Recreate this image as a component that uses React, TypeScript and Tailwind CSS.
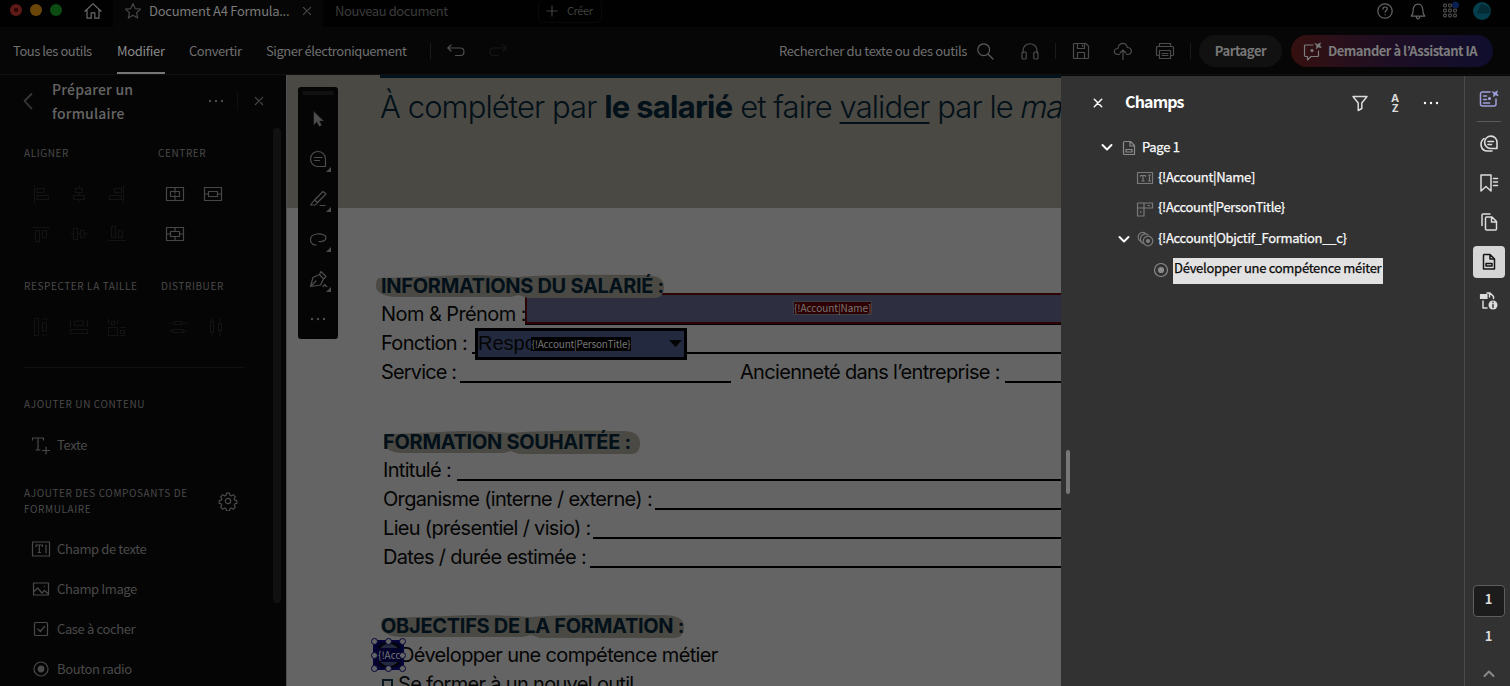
import type { ReactNode } from "react";

interface IconProps {
  children: ReactNode;
  className?: string;
}

const Icon: React.FC<IconProps> = ({ children, className = "" }) => (
  <svg
    viewBox="0 0 20 20"
    fill="none"
    stroke="currentColor"
    strokeWidth="1.2"
    strokeLinecap="round"
    strokeLinejoin="round"
    className={"h-5 w-5 shrink-0 " + className}
  >
    {children}
  </svg>
);

const Dots = ({ className = "" }) => (
  <Icon className={className}>
    <g fill="currentColor" stroke="none">
      <circle cx="4" cy="10" r="1.2" />
      <circle cx="10" cy="10" r="1.2" />
      <circle cx="16" cy="10" r="1.2" />
    </g>
  </Icon>
);

const Close = ({ className = "" }) => (
  <Icon className={className}>
    <path d="M6.300 6.300l7.400 7.400M13.700 6.300l-7.400 7.400" />
  </Icon>
);

const Sparkle = (
  <path d="M13.300 2.600l2.500.8 2.700-1.600-.7 2.500 1.500 2.400-2.700-.6-2.300 1.600.5-2.500z" fill="currentColor" strokeWidth=".6" />
);

const TabBar = () => (
  <header className="flex h-[27px] shrink-0 bg-[#010101]">
    <div className="flex h-[22px] w-full items-center">
      <div className="mb-0.5 ml-2.5 flex gap-2">
        <i className="flex h-3 w-3 items-center justify-center rounded-full bg-[#5e1a16]">
          <i className="h-1 w-1 rounded-full bg-[#2b0505]" />
        </i>
        <i className="h-3 w-3 rounded-full bg-[#6a4608]" />
        <i className="h-3 w-3 rounded-full bg-[#0b4c12]" />
      </div>
      <Icon className="ml-[21px] text-[#6b6b6b]">
        <path d="M2 10.3L10 2.6l8 7.7M4 8.8v8.4h4.2v-5.4h3.6v5.4H16V8.8" />
      </Icon>
      <div className="ml-2.5 flex h-[27px] items-center self-start bg-[#060606] pr-1.5 pb-[5px] pl-2.5">
        <Icon className="text-[#454545]">
          <path d="M10 2.6l2.2 5 5.4.5-4.1 3.6 1.2 5.3-4.7-2.8-4.7 2.8 1.2-5.3-4.1-3.6 5.4-.5z" />
        </Icon>
        <span className="ml-1.5 w-[140px] text-[13px] tracking-[-0.26px] text-[#7a7a7a]">Document A4 Formula...</span>
        <Close className="ml-2 text-[#484848]" />
      </div>
      <span className="ml-3 w-[203px] text-[13px] tracking-[-0.42px] text-[#3b3b3b]">Nouveau document</span>
      <div className="flex h-6 w-16 items-center rounded-md border border-[#0a0a0a] text-[#3f3f3f]">
        <Icon className="ml-[3px]">
          <path d="M5 10h10M10 5v10" />
        </Icon>
        <span className="-mt-0.5 ml-[5px] text-[11px] tracking-[-0.4px]">Créer</span>
      </div>
      <Icon className="ml-[773px] text-[#666]">
        <circle cx="10" cy="10" r="7.2" />
        <path d="M7.9 8.2c0-3 4.3-2.7 4.3-.3 0 1.6-2.1 1.7-2.1 3.3M10.1 13.6v.2" />
      </Icon>
      <Icon className="ml-[13px] text-[#666]">
        <path d="M3.2 15.2h13.6c-1.8-1.7-2-2.6-2-6.2 0-3.2-1.7-5.8-4.8-5.8S5.200 5.800 5.200 9c0 3.600-.2 4.500-2 6.200zM8.300 15.500c.3 3.300 3.100 3.300 3.400 0" />
      </Icon>
      <Icon className="ml-3 text-[#4a4a4a]">
        {[4.5, 9.5, 14.5].map((y) =>
          [5, 10, 15].map((x) => <rect key={x + "-" + y} x={x - 1.4} y={y - 1.4} width="2.8" height="2.8" rx=".8" />)
        )}
        <circle cx="15.500" cy="4" r="3.500" fill="#0a2050" stroke="none" />
      </Icon>
      <Icon className="ml-3">
        <circle cx="10" cy="10" r="9" fill="#053f4e" stroke="none" />
        <path d="M9 3L5 12.500h13.500C18.500 7 15 4 9 3z" fill="#042a34" stroke="none" />
      </Icon>
    </div>
  </header>
);

const Toolbar = () => (
  <nav className="flex h-12 shrink-0 items-center border-b border-[#101010] bg-[#060606] pl-[13px] text-[13px] tracking-[-0.45px] text-[#6f6f6f]">
    <span className="w-[104px]">Tous les outils</span>
    <span className="relative mr-6 flex h-full w-12 items-center tracking-[-0.3px] text-[#8a8a8a]">
      Modifier
      <i className="absolute bottom-0 left-0 h-0.5 w-full bg-[#777]" />
    </span>
    <span className="w-[77px]">Convertir</span>
    <span className="w-[164px]">Signer électroniquement</span>
    <i className="h-4 w-px bg-[#1a1a1a]" />
    <Icon className="ml-[15px] text-[#4f4f4f]">
      <path d="M5 4L1.800 7 5 10M2 7h12.500c4.600 0 4.600 7.500 0 7.500H9.500" />
    </Icon>
    <Icon className="ml-[22px] text-[#161616]">
      <path d="M15 4l3.200 3L15 10M18 7H5.500c-4.600 0-4.600 7.500 0 7.500h5" />
    </Icon>
    <span className="ml-[271px] w-[196px] tracking-[-0.37px]">Rechercher du texte ou des outils</span>
    <Icon className="text-[#5c5c5c]">
      <circle cx="8.700" cy="8.700" r="5.900" />
      <path d="M13 13l5 5" />
    </Icon>
    <Icon className="ml-[25px] text-[#4c4c4c]">
      <path d="M3 12V9.500c0-9 14-9 14 0V12" />
      <rect x="2" y="11" width="4.200" height="7" rx="1" />
      <rect x="13.800" y="11" width="4.200" height="7" rx="1" />
    </Icon>
    <i className="ml-[15px] h-4 w-px bg-[#1a1a1a]" />
    <Icon className="ml-[15px] text-[#4c4c4c]">
      <path d="M2.500 3.500a1 1 0 011-1h11.300l2.700 2.700v11.300a1 1 0 01-1 1h-13a1 1 0 01-1-1zM6.500 2.500v5h7v-5M6.500 17.500v-6h7v6M11.500 4v1.500" />
    </Icon>
    <Icon className="ml-[22px] text-[#4c4c4c]">
      <path d="M6.500 13.500H5c-5 0-4.800-6 0-6C5.500 1 13 .5 14.300 6.500c5.500 0 5.200 7 .7 7h-1.500M10 18.500V9.300M7 12l3-3 3 3" />
    </Icon>
    <Icon className="ml-[22px] text-[#4c4c4c]">
      <path d="M4.500 5.500v-3h11v3M4.500 14.500h-2a1 1 0 01-1-1v-7a1 1 0 011-1h15a1 1 0 011 1v7a1 1 0 01-1 1h-2" />
      <path d="M4.500 9.500h11v8h-11zM7 12.500h6M7 14.500h6" />
    </Icon>
    <i className="ml-[15px] h-4 w-px bg-[#1a1a1a]" />
    <span className="ml-2 flex h-8 w-[83px] items-center justify-center rounded-full bg-[#111] font-bold tracking-[-0.45px] text-[#777]">
      Partager
    </span>
    <span className="ml-[9px] flex h-8 w-[202px] items-center rounded-full bg-linear-to-r from-[#350f0e] via-[#1d0e24] to-[#100e2e] pl-[11px] font-bold tracking-[-0.5px] text-[#7c7c7c]">
      <Icon>
        <path d="M11 4H3.500a1 1 0 00-1 1v9.500a1 1 0 001 1h2V19l3.500-3.500h6.500a1 1 0 001-1V10" />
        {Sparkle}
        <circle cx="10" cy="9.500" r="1" fill="currentColor" />
      </Icon>
      <span className="ml-1.5">Demander à l’Assistant IA</span>
    </span>
  </nav>
);

const alignIcons = [
  "M3.500 1.500v17M6 4.500h7v4H6zM6 11.500h11.500v4H6z",
  "M10 1.500v3M10 8.500v3M10 15.500v3M6.500 4.500h7v4h-7zM4.500 11.500h11v4h-11z",
  "M16.500 1.500v17M7.500 4.500h7v4h-7zM2.500 11.500h12v4h-12z",
];

const alignIcons2 = [
  "M1.500 3.500h17M4.500 6.500h4v11h-4zM11.500 6.500h4v7h-4z",
  "M1.500 10h3M8.500 10h3M15.500 10h3M4.500 4.500h4v11h-4zM11.500 6.500h4v7h-4z",
  "M1.500 16.500h17M4.500 2.500h4v11h-4zM11.500 6.500h4v7h-4z",
];

const sizeIcons = [
  "M3.500 1.500h4v17h-4zM11.500 6h4v8h-4zM11 2h5.500M11 18h5.500",
  "M5.500 4h9v4.500h-9zM1.500 12.500h17v4h-17zM1.500 3.500v6M18.500 3.500v6",
  "M1.500 10.500h9v8h-9zM4.500 4h3v4h-3zM13.500 13.500h4v3h-4zM1.500 2v5M10.500 2v5M13 10.500h5.500M13 18.500h5.500",
];

const distributeIcons = [
  "M1.500 6h5M13.500 6h5M6.500 4.500h7v3h-7zM1.500 14h3M15.500 14h3M4.500 12.500h11v3h-11z",
  "M6 1.500v3M6 15.500v3M4.500 4.500h3v11h-3zM14 1.500v5M14 13.500v5M12.500 6.500h3v7h-3z",
];

const components = [
  {
    label: "Champ de texte",
    icon: <path d="M1.500 3h17v14h-17zM5 7.500V6h6.500v1.500M8.300 6v7.500M7 13.500h2.600M15 6v8" />,
  },
  {
    label: "Champ Image",
    icon: <path d="M2.500 4h15v12h-15zM2.500 13l4-4 4.500 5 2.500-2.500 4 3.500M13.300 7.300v.2" />,
  },
  {
    label: "Case à cocher",
    icon: <path d="M4.500 3.500h11a1 1 0 011 1v11a1 1 0 01-1 1h-11a1 1 0 01-1-1v-11a1 1 0 011-1zM6.800 10l2.500 2.500 4.200-5" />,
  },
  {
    label: "Bouton radio",
    icon: (
      <>
        <circle cx="10" cy="10" r="7" />
        <circle cx="10" cy="10" r="2.800" fill="currentColor" />
      </>
    ),
  },
];

const Cell: React.FC<{ d: string; on?: boolean }> = ({ d, on }) => (
  <span className="flex w-[38px] justify-center">
    <Icon className={on ? "text-[#474747]" : "text-[#131313]"}>
      <path d={d} />
    </Icon>
  </span>
);

const LeftPanel = () => (
  <aside className="relative w-[286px] shrink-0 bg-[#050505] text-[#4a4a4a]">
    <div className="flex h-[70px] pt-[3px]">
      <Icon className="mt-[13px] ml-[18px] text-[#383838]">
        <path d="M13.500 3L6.500 10l7 7.500" strokeWidth="1.800" />
      </Icon>
      <h2 className="-mt-px ml-3.5 w-[154px] text-[14px] leading-6 font-medium tracking-[0.2px] text-[#666]">
        Préparer un
        <br />
        formulaire
      </h2>
      <Dots className="mt-[13px]" />
      <i className="mt-[14px] ml-[11px] h-[18px] w-px bg-[#0f0f0f]" />
      <Close className="mt-[13px] ml-[11px]" />
    </div>

    <div className="flex h-4 pl-6 text-[10px] leading-4 tracking-[0.6px]">
      <h3 className="w-[134px]">ALIGNER</h3>
      <h3>CENTRER</h3>
    </div>
    <div className="mt-[13px] flex h-10 items-center pl-[22px]">
      {alignIcons.map((d) => (
        <Cell key={d} d={d} />
      ))}
      <span className="w-5" />
      <Cell on d="M1.500 3.500h17v13h-17zM5.500 7.500h9v5h-9zM10 3.500v5.500M10 11v5.500" />
      <Cell on d="M1.500 3.500h17v13h-17zM5.500 7.500h9v5h-9zM1.500 10h4M14.500 10h4" />
    </div>
    <div className="flex h-10 items-center pl-[22px]">
      {alignIcons2.map((d) => (
        <Cell key={d} d={d} />
      ))}
      <span className="w-5" />
      <Cell on d="M1.500 3.500h17v13h-17zM5.500 7.500h9v5h-9zM10 3.500v4M10 12.500v4M1.500 10h4M14.500 10h4" />
    </div>

    <div className="mt-6 flex h-4 pl-6 text-[10px] leading-4 tracking-[0.6px]">
      <h3 className="w-[137px]">RESPECTER LA TAILLE</h3>
      <h3>DISTRIBUER</h3>
    </div>
    <div className="mt-[13px] flex h-10 items-center pl-[22px]">
      {sizeIcons.map((d) => (
        <Cell key={d} d={d} />
      ))}
      <span className="w-[23px]" />
      {distributeIcons.map((d) => (
        <Cell key={d} d={d} />
      ))}
    </div>
    <hr className="mt-5 ml-6 w-[221px] border-[#111]" />

    <h3 className="mt-[28px] ml-6 text-[10px] leading-4 tracking-[0.6px]">AJOUTER UN CONTENU</h3>
    <div className="mt-[13px] flex h-10 items-center pl-[31px] text-[13px] tracking-[-0.35px]">
      <Icon>
        <path d="M1.500 5V3h11v2M7 3v12M5 15h4M15 12v7M11.500 15.500h7" />
      </Icon>
      <span className="ml-1.5">Texte</span>
    </div>

    <div className="mt-5 flex h-8 items-center pl-6">
      <h3 className="w-[194px] text-[10px] leading-4 tracking-[0.6px]">
        AJOUTER DES COMPOSANTS DE
        <br />
        FORMULAIRE
      </h3>
      <Icon className="-mt-px">
        <circle cx="10" cy="10" r="2.700" />
        <path d="M8.500 2.200h3l.5 2.200 1.400.6 2-1.200 2 2-1.200 2 .6 1.400 2 .5v2.600l-2 .5-.6 1.400 1.200 2-2 2-2-1.200-1.400.6-.5 2.200h-3L8 17.600l-1.400-.6-2 1.200-2-2 1.200-2-.6-1.400-2-.5V9.700l2-.5.6-1.400-1.200-2 2-2 2 1.200L8 4.400z" />
      </Icon>
    </div>
    <div className="mt-3">
      {components.map((c) => (
        <div key={c.label} className="flex h-10 items-center pl-[31px] text-[13px] tracking-[-0.37px]">
          <Icon>{c.icon}</Icon>
          <span className="ml-1.5">{c.label}</span>
        </div>
      ))}
    </div>
    <i className="absolute top-[53px] right-[5px] h-[475px] w-2 rounded-full bg-[#111]" />
  </aside>
);

const QuickTools = () => (
  <div className="absolute top-3 left-[11px] flex h-[252px] w-10 flex-col items-center rounded-[3px] bg-[#050505] pt-1 text-[#4d4d4d]">
    <i className="h-1 w-8 rounded-full bg-[#111]" />
    <Icon className="mt-[14px]">
      <path d="M6 3v12.500l3-3 2.300 4.700 2-1-2.300-4.500h4z" fill="currentColor" strokeWidth=".5" />
    </Icon>
    {[
      "M17.500 17.500H10a7.500 7.500 0 117.500-7.500zM6.500 8.500h7.500M6.500 11.500h5",
      "M6.500 11l8.500-8.500 3 2.500-8.500 8.500zM6.500 11l3 2.500-2 2.500H2.500zM12 16.500h5",
      "M11 12.500c3.500.5 7-1 7-3.500 0-3.500-5-4.500-9-4-9 1-8 10.500-1 11",
      "M2.500 17.500L5 8.500l6.500-3 4 4.500-3 6zM3 17l5-5M11.500 5.500L13 2.500l5 5-2.500 2.500M15 17.500l2-2 1 2h1",
    ].map((d) => (
      <div key={d} className="relative mt-5 h-5">
        <Icon>
          <path d={d} />
        </Icon>
        <svg viewBox="0 0 5 5" className="absolute -right-[3px] -bottom-[3px] h-[5px] w-[5px]">
          <path d="M5 0v5H0z" fill="currentColor" />
        </svg>
      </div>
    ))}
    <Dots className="mt-5" />
  </div>
);

interface HeadingProps {
  children: ReactNode;
  width: number;
  offset: number;
}

// section title on a brush stroke
const Heading: React.FC<HeadingProps> = ({ children, width, offset }) => (
  <h4 className="relative h-[28.800px] text-[20px] font-bold tracking-[-0.3px] text-[#02101a]">
    <svg
      viewBox="0 0 285 23"
      preserveAspectRatio="none"
      className="absolute top-[3px] h-[23px] overflow-visible"
      style={{ left: offset, width }}
    >
      <path
        d="M4 3C40 2 60 1 85 0c25 0 40 1 55 2 45-3 90-2 125-2 14 0 20 4 20 12 0 8-4 11-10 11H150l-9-3-8 2H22C6 22 0 16 0 12c0-6 1-9 4-9z"
        fill="#4b4943"
      />
    </svg>
    <span className="relative">{children}</span>
  </h4>
);

interface LineProps {
  label: string;
  width: string;
}

const Line: React.FC<LineProps> = ({ label, width }) => (
  <div className="flex h-[28.800px]">
    <span className={"shrink-0 " + width}>{label}</span>
    <i className="mt-[23px] h-0.5 grow bg-black" />
  </div>
);

const Handle: React.FC<{ at: string }> = ({ at }) => (
  <i className={"absolute h-[7px] w-[7px] rounded-full border border-[#06063a] bg-[#646464] " + at} />
);

const Doc = () => (
  <main className="relative w-[775px] shrink-0 overflow-hidden border-l border-[#4f4f4f] bg-[#646464] font-['Inter',sans-serif] whitespace-nowrap text-[#050505]">
    <div className="h-[133px] bg-[#4b4943] pl-[93px]">
      <div className="h-[3px] bg-[#02131d]" />
      <p className="mt-1.5 text-[31px] leading-[46px] font-light tracking-[-0.92px] text-[#021019]">
        À compléter par <b className="font-bold tracking-[-0.75px]">le salarié</b> et faire{" "}
        <span className="underline decoration-2 underline-offset-4">valider</span> par le{" "}
        <span className="inline-block -skew-x-12">manager</span>
      </p>
    </div>

    <div className="mt-[63.600px] pl-[94px] text-[20px] leading-[28.800px] tracking-[-0.68px]">
      <Heading width={288} offset={-5}>
        INFORMATIONS DU SALARIÉ :
      </Heading>
      <div className="flex h-[28.800px]">
        <span className="w-[144px] shrink-0 tracking-[-0.58px]">Nom &amp; Prénom :</span>
        <div className="-mt-[7.400px] h-8 grow border-b-2 border-black">
          <div className="flex h-[31px] items-center border-2 border-r-0 border-[#2e0202] bg-[#2d2f40] pl-[266px]">
            <span className="-mt-px h-[14px] w-[79px] border border-[#3c3c46] bg-[#2e0202] font-['Noto_Sans_CJK_JP',sans-serif] text-[10px] leading-[12px] tracking-[-0.05px] text-[#777]">
              {"{!Account|Name]"}
            </span>
          </div>
        </div>
      </div>
      <div className="flex h-[28.800px]">
        <span className="w-[91px] shrink-0">Fonction :</span>
        <i className="mt-[23px] h-0.5 w-[3px] bg-black" />
        <div className="relative -mt-[1.400px] flex h-8 w-[212px] shrink-0 items-center border-[3px] border-black bg-[#232a3f] font-['Liberation_Sans',sans-serif] text-[20px] tracking-normal">
          Respo
          <span className="absolute left-[53px] h-[14px] w-[100px] bg-black text-center font-['Noto_Sans_CJK_JP',sans-serif] text-[10px] leading-[14px] tracking-[-0.2px] text-[#777]">
            {"{!Account|PersonTitle}"}
          </span>
          <svg viewBox="0 0 13 7" className="absolute right-0.5 h-[7px] w-[13px]">
            <path d="M0 0h13L6.500 7z" fill="#050505" />
          </svg>
        </div>
        <i className="mt-[23px] h-0.5 grow bg-black" />
      </div>
      <div className="flex h-[28.800px]">
        <span className="w-[79px] shrink-0 tracking-[-0.85px]">Service :</span>
        <i className="mt-[23px] h-0.5 w-[271px] bg-black" />
        <span className="ml-[9px] w-[265px] shrink-0">Ancienneté dans l’entreprise :</span>
        <i className="mt-[23px] h-0.5 grow bg-black" />
      </div>

      <div className="mt-[40.800px] pl-0.5">
        <Heading width={256} offset={1}>
          FORMATION SOUHAITÉE :
        </Heading>
        <Line label="Intitulé :" width="w-[74px]" />
        <Line label="Organisme (interne / externe) :" width="w-[272px]" />
        <Line label="Lieu (présentiel / visio) :" width="w-[210px]" />
        <Line label="Dates / durée estimée :" width="w-[207px]" />
      </div>

      <div className="mt-[40.400px]">
        <Heading width={303} offset={0}>
          OBJECTIFS DE LA FORMATION :
        </Heading>
        <div className="relative h-[28.800px] pl-[19px] tracking-[-0.65px]">
          Développer une compétence métier
          <div className="absolute -top-px -left-2 flex h-[30px] w-[31px] items-center justify-center border-2 border-[#06063a] bg-[#03032c]">
            <svg viewBox="0 0 26 26" className="absolute h-[26px] w-[26px]">
              <circle cx="13" cy="13" r="12" fill="#232a3f" stroke="#050505" strokeWidth="2" />
            </svg>
            <span className="relative h-[14px] w-full overflow-hidden bg-[#03032c] pl-[3px] font-['Noto_Sans_CJK_JP',sans-serif] text-[10px] leading-[14px] tracking-normal text-[#777]">
              {"{!Acc"}
            </span>
            <Handle at="-top-1 -left-1" />
            <Handle at="-top-1 left-[10px]" />
            <Handle at="-top-1 -right-1" />
            <Handle at="top-[10px] -left-1" />
            <Handle at="top-[10px] -right-1" />
            <Handle at="-bottom-1 -left-1" />
            <Handle at="-bottom-1 left-[10px]" />
            <Handle at="-bottom-1 -right-1" />
          </div>
        </div>
        <div className="flex h-[28.800px]">
          <i className="mt-[9px] mr-[5px] ml-px h-[11px] w-[11px] border-2 border-[#0a1820]" />
          Se former à un nouvel outil
        </div>
      </div>
    </div>
    <QuickTools />
  </main>
);

const Chevron = ({ className = "" }) => (
  <Icon className={className}>
    <path d="M5.500 8l4.500 4.500L14.500 8" strokeWidth="2" />
  </Icon>
);

const fieldsIcons = {
  page: (
    <path d="M5.500 3.500h6l4 4v9h-10a1 1 0 01-1-1v-11a1 1 0 011-1zM11 3.500V8h4.500M7 11.500h6v2.500H7z" />
  ),
  text: <path d="M2.500 4.500h15v11h-15zM5.500 8.500V7.500h5v1M8 7.500V13M7 13h2M14.500 7v6M13.500 7h2M13.500 13h2" />,
  list: <path d="M2.500 4h15v5h-15zM9 4v13H2.500V4M13 6.500h1.500M5.700 12.500v1" />,
  group: (
    <>
      <path d="M5.500 12.800A4.800 4.800 0 118.800 3.800M7 14.500A4.800 4.800 0 1112 5.500" />
      <circle cx="12" cy="12" r="4.800" />
      <circle cx="12" cy="12" r="1.500" fill="currentColor" />
    </>
  ),
  radio: (
    <>
      <circle cx="10" cy="10" r="6.500" />
      <circle cx="10" cy="10" r="2.500" fill="currentColor" />
    </>
  ),
};

const FieldsPanel = () => (
  <section className="relative mt-px w-[403px] shrink-0 bg-[#323232] text-[13px] tracking-[-0.3px] text-[#fafafa]">
    <div className="flex h-[56px] items-center pb-[3px] pl-[27px]">
      <Close className="stroke-[1.5]" />
      <h2 className="-mt-[3px] ml-[17px] w-[225px] text-[16px] leading-6 font-bold tracking-[-0.85px] text-white">Champs</h2>
      <Icon className="text-[#dcdcdc]">
        <path d="M3 3.500h14l-5.200 6.500v5.500l-3.600 2V10z" strokeWidth="1.500" />
      </Icon>
      <span className="ml-[15px] flex w-5 flex-col items-center font-['Open_Sans',sans-serif] text-[11px] leading-[10px] font-bold text-[#dcdcdc]">
        <span>A</span>
        <span>Z</span>
      </span>
      <Dots className="ml-[16px]" />
    </div>
    <div className="[-webkit-text-stroke:0.25px]">
      <div className="flex h-[30.300px] items-center pl-9">
        <Chevron />
        <Icon className="mt-0.5 ml-0.5 text-[#8a8a8a]">{fieldsIcons.page}</Icon>
        <span className="ml-[3px]">Page 1</span>
      </div>
      <div className="flex h-[30.300px] items-center pl-[73px]">
        <Icon className="mt-0.5 ml-px text-[#7a7a7a]">{fieldsIcons.text}</Icon>
        <span className="-mt-0.5 ml-[3px]">{"{!Account|Name]"}</span>
      </div>
      <div className="flex h-[30.300px] items-center pl-[73px]">
        <Icon className="mt-0.5 ml-px text-[#7a7a7a]">{fieldsIcons.list}</Icon>
        <span className="-mt-px ml-[3px] tracking-[-0.34px]">{"{!Account|PersonTitle}"}</span>
      </div>
      <div className="-mt-px flex h-[31.300px] items-center pl-[53px]">
        <Chevron className="mt-0.5" />
        <Icon className="mt-0.5 ml-0.5 text-[#7a7a7a]">{fieldsIcons.group}</Icon>
        <span className="ml-0.5">{"{!Account|Objctif_Formation__c}"}</span>
      </div>
      <div className="flex h-[30.300px] items-center pl-[90px]">
        <Icon className="mt-[3px] text-[#8a8a8a]">{fieldsIcons.radio}</Icon>
        <span className="mt-[6px] ml-0.5 h-[26px] w-[210px] bg-[#e2e2e2] pl-px leading-[20px] tracking-[-0.28px] whitespace-nowrap text-[#0a0a0a]">
          Développer une compétence méiter
        </span>
      </div>
    </div>
    <i className="absolute top-[374px] left-[5px] h-11 w-1 rounded-full bg-[#777]" />
  </section>
);

const Rail = () => (
  <aside className="mt-px flex w-[46px] shrink-0 flex-col items-center border-l border-[#4a4a4a] bg-[#323232] pl-0.5 text-[#dcdcdc]">
    <Icon className="mt-[13px] text-[#9f9fdc]">
      <path d="M11 3H3.500a2 2 0 00-2 2v10a2 2 0 002 2H15a2 2 0 002-2v-5M4.500 7h3M4.500 10.500h3M4.500 14h6" strokeWidth="1.500" />
      <circle cx="10.500" cy="9.500" r="1" fill="currentColor" />
      {Sparkle}
    </Icon>
    <i className="mt-3 h-px w-6 bg-[#5a5a5a]" />
    <Icon className="mt-[12px]">
      <path d="M18 14.500h-6.500A6.200 6.200 0 1118 8.500zM5 4.500c-5 4-3.500 12.500 3.500 12.500H13M9 7.500h5.500M9 10.500h3.500" strokeWidth="1.600" />
    </Icon>
    <Icon className="mt-[19px]">
      <path d="M2 2h10v16l-5-4.500L2 18zM14.500 5.500h4M14.500 9h4M14.500 12.500h4" strokeWidth="1.500" />
    </Icon>
    <Icon className="mt-[19px]">
      <path d="M3 13.500V3a1 1 0 011-1h7M6.500 6a1 1 0 011-1H13l4.500 4.500V17a1 1 0 01-1 1h-9a1 1 0 01-1-1zM12.500 5v5h5" strokeWidth="1.500" />
    </Icon>
    <span className="mt-[14px] flex h-8 w-8 items-center justify-center rounded-[4px] bg-[#d6d6d6] text-[#161616]">
      <Icon>
        <path d="M5 2.500h6l4.500 4.500v10H4.500V3zM11 2.500V7h4.500M7 11.500h6V14H7z" strokeWidth="1.500" />
      </Icon>
    </span>
    <Icon className="mt-[13px]">
      <path d="M8 2h3l3.500 3.500v2M10.500 2v4M4 10v7h4" strokeWidth="1.500" />
      <rect x="1.500" y="3.500" width="6.500" height="4" fill="currentColor" />
      <circle cx="14" cy="14" r="4.500" fill="currentColor" stroke="none" />
      <path d="M14 13.500v3M14 11.300v.2" stroke="#323232" strokeWidth="1.400" />
    </Icon>
    <span className="mt-[274px] flex h-8 w-8 justify-center rounded-[4px] border border-[#5e5e5e] bg-[#1c1c1c] text-[13px] leading-[25px] font-bold">
      1
    </span>
    <span className="mt-[9px] text-[13px] leading-5 font-bold">1</span>
    <Chevron className="mt-[18px] rotate-180 text-[#8a8a8a]" />
  </aside>
);

export default function App() {
  return (
    <div className="flex h-[686px] w-[1510px] flex-col overflow-hidden bg-[#050505] font-['Noto_Sans_CJK_JP',sans-serif] whitespace-nowrap">
      <TabBar />
      <Toolbar />
      <div className="flex h-[611px]">
        <LeftPanel />
        <Doc />
        <FieldsPanel />
        <Rail />
      </div>
    </div>
  );
}
